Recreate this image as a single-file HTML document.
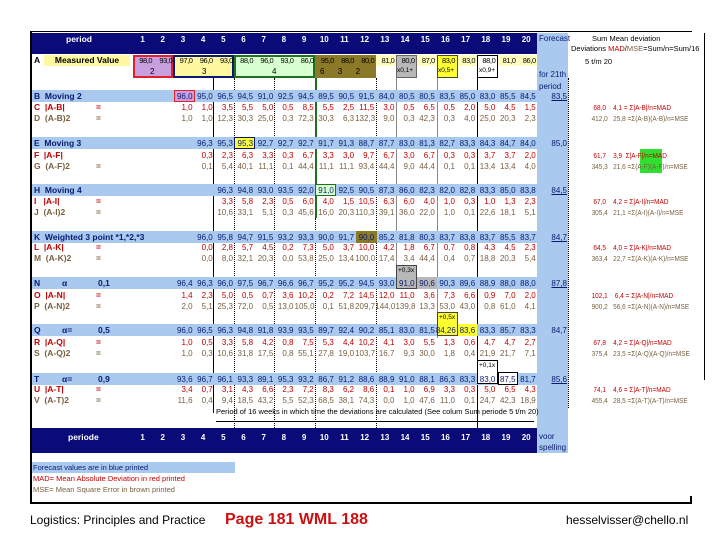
<!DOCTYPE html>
<html><head><meta charset="utf-8"><style>
*{margin:0;padding:0;box-sizing:border-box}
body{width:720px;height:540px;background:#fff;position:relative;overflow:hidden;font-family:"Liberation Sans",sans-serif}
.a{position:absolute}
.band{position:absolute;left:32px;width:505px;height:12px;background:#a9c9ef}
.row{position:absolute;left:133px;display:grid;grid-template-columns:repeat(20,20.2px);font-size:8px;line-height:11px;height:11px;text-align:right;white-space:nowrap}
.row span{padding-right:1px}
.b{color:#0a1a70}.r{color:#c00000}.br{color:#7a6040}
.lab{position:absolute;left:34px;font-size:8.5px;line-height:11px;font-weight:bold}
.fc{position:absolute;left:537px;width:30px;text-align:right;font-size:8px;color:#0a1a70;text-decoration:underline;line-height:11px}
.rt{position:absolute;left:588px;font-size:7.5px;line-height:11px;white-space:pre;transform:scaleX(0.86);transform-origin:0 0}
.vl{position:absolute;width:0}
</style></head><body>
<div class="a" style="left:30px;top:31px;width:2px;height:473px;background:#000"></div>
<div class="a" style="left:30px;top:31px;width:662px;height:1px;background:#000"></div>
<div class="a" style="left:30px;top:502px;width:662px;height:2px;background:#000"></div>
<div class="a" style="left:690px;top:496px;width:2px;height:8px;background:#000"></div>
<div class="a" style="left:704px;top:33px;width:1px;height:347px;background:#000"></div>
<div class="a" style="left:32px;top:33px;width:505px;height:21px;background:#0a0a78"></div>
<div class="a" style="left:537px;top:33px;width:31px;height:420px;background:#a9c9ef"></div>
<div class="a" style="left:32px;top:428px;width:505px;height:25px;background:#0a0a78"></div>
<div class="a" style="left:66px;top:34px;color:#fff;font-size:8.5px;font-weight:bold">period</div>
<div class="row" style="top:34px;color:#fff;font-weight:bold;text-align:center;font-size:8px"><span>1</span><span>2</span><span>3</span><span>4</span><span>5</span><span>6</span><span>7</span><span>8</span><span>9</span><span>10</span><span>11</span><span>12</span><span>13</span><span>14</span><span>15</span><span>16</span><span>17</span><span>18</span><span>19</span><span>20</span></div>
<div class="a" style="left:539px;top:34px;color:#0a1a70;font-size:8px">Forecast</div>
<div class="a" style="left:592px;top:34px;font-size:7.5px">Sum Mean deviation</div>
<div class="a" style="left:571px;top:44px;font-size:7.5px">Deviations <span class="r">MAD</span>/<span class="br">MSE</span>=Sum/n=Sum/16</div>
<div class="a" style="left:585px;top:57px;font-size:7.5px">5 t/m 20</div>
<div class="a" style="left:539px;top:69px;font-size:8px;color:#0a1a70;line-height:12px">for 21th<br>period</div>
<div class="a" style="left:32px;top:55px;width:10px;height:11px;font-size:8.5px;font-weight:bold;padding-left:2px">A</div>
<div class="a" style="left:44px;top:55px;width:86px;height:11px;background:#fff8a0;font-size:8.5px;font-weight:bold;text-align:center;line-height:11px">Measured Value</div>
<div class="a" style="left:133px;top:55px;width:404px;height:11px;background:#fffcc0"></div>
<div class="a" style="left:133px;top:55px;width:40px;height:23px;background:#c8a0e0;border:2px solid #e0202a"></div>
<div class="a" style="left:173px;top:55px;width:61px;height:23px;background:#fff8a0;border:2px solid #0a1a70"></div>
<div class="a" style="left:234px;top:55px;width:81px;height:23px;background:#d8ffd0;border:2px solid #207020"></div>
<div class="a" style="left:315px;top:55px;width:61px;height:23px;background:#8a7a28"></div>
<div class="a" style="left:396px;top:55px;width:21px;height:23px;background:#b8b8b8;border:1px solid #666"></div>
<div class="a" style="left:437px;top:55px;width:21px;height:23px;background:#ffff30;border:1px solid #444"></div>
<div class="a" style="left:477px;top:55px;width:21px;height:23px;background:#fff;border:1.5px solid #000"></div>
<div class="row" style="top:55px;font-size:7.5px;letter-spacing:-0.4px"><span>98,0</span><span>93,0</span><span>97,0</span><span>96,0</span><span>93,0</span><span>88,0</span><span>96,0</span><span>93,0</span><span>86,0</span><span>95,0</span><span>88,0</span><span>80,0</span><span>81,0</span><span>80,0</span><span>87,0</span><span>83,0</span><span>83,0</span><span>88,0</span><span>81,0</span><span>86,0</span></div>
<div class="a" style="left:150px;top:67px;font-size:8px">2</div>
<div class="a" style="left:202px;top:67px;font-size:8px">3</div>
<div class="a" style="left:272px;top:67px;font-size:8px">4</div>
<div class="a" style="left:320px;top:67px;font-size:8px">6&nbsp;&nbsp;&nbsp;&nbsp;&nbsp;&nbsp;3&nbsp;&nbsp;&nbsp;&nbsp;&nbsp;&nbsp;2</div>
<div class="a" style="left:397px;top:67px;font-size:6.5px">x0,1+</div>
<div class="a" style="left:438px;top:67px;font-size:6.5px">x0,5+</div>
<div class="a" style="left:479px;top:67px;font-size:6.5px">x0,9+</div>
<div class="vl" style="left:213px;top:78px;height:335px;border-left:1.5px solid #000"></div>
<div class="vl" style="left:234px;top:78px;height:350px;border-left:1px dotted #000"></div>
<div class="vl" style="left:315px;top:78px;height:140px;border-left:2px solid #207020"></div>
<div class="vl" style="left:315px;top:218px;height:210px;border-left:1px dotted #000"></div>
<div class="vl" style="left:274px;top:78px;height:350px;border-left:1px dotted #000"></div>
<div class="vl" style="left:376px;top:78px;height:350px;border-left:1px dotted #000"></div>
<div class="vl" style="left:396px;top:78px;height:190px;border-left:1.5px solid #888"></div>
<div class="vl" style="left:437px;top:78px;height:260px;border-left:1.5px solid #a09020"></div>
<div class="vl" style="left:477px;top:78px;height:350px;border-left:1px solid #000"></div>
<div class="vl" style="left:568px;top:78px;height:330px;border-left:1px dotted #000"></div>
<div class="band" style="top:90px"></div><div class="band" style="top:137px"></div><div class="band" style="top:184px"></div><div class="band" style="top:231px"></div><div class="band" style="top:277px"></div><div class="band" style="top:324px"></div><div class="band" style="top:373px"></div>
<div class="a" style="left:174px;top:90px;width:21px;height:12px;background:#c8a0e0;border:1.5px solid #e0202a"></div>
<div class="a" style="left:234px;top:137px;width:21px;height:12px;background:#ffff40;border:1.5px solid #0a1a70"></div>
<div class="a" style="left:315px;top:184px;width:21px;height:12px;background:#d8ffd0;border:1.5px solid #207020"></div>
<div class="a" style="left:356px;top:231px;width:21px;height:12px;background:#8a7a28"></div>
<div class="a" style="left:396px;top:265px;width:21px;height:24px;background:#b8b8b8;border:1px solid #444"></div>
<div class="a" style="left:417px;top:277px;width:20px;height:12px;background:#b8b8b8"></div>
<div class="a" style="left:437px;top:312px;width:21px;height:24px;background:#ffff30;border:1px solid #444"></div>
<div class="a" style="left:458px;top:324px;width:19px;height:12px;background:#ffff30"></div>
<div class="a" style="left:477px;top:360px;width:21px;height:24px;background:#fff;border:1.5px solid #000"></div>
<div class="a" style="left:498px;top:372px;width:20px;height:13px;background:#fff;border:1.5px solid #000"></div>
<div class="a" style="left:398px;top:267px;font-size:6.5px">+0,3x</div>
<div class="a" style="left:439px;top:314px;font-size:6.5px">+0,5x</div>
<div class="a" style="left:479px;top:362px;font-size:6.5px">+0,1x</div>
<div class="a" style="left:640px;top:149px;width:22px;height:24px;background:#30e030"></div>
<div class="lab b" style="top:91px">B&nbsp; Moving 2</div>
<div class="lab r" style="top:102px">C&nbsp; |A-B|<span style="position:absolute;left:62px">=</span></div>
<div class="lab br" style="top:113px">D&nbsp; (A-B)2<span style="position:absolute;left:62px">=</span></div>
<div class="lab b" style="top:138px">E&nbsp; Moving 3</div>
<div class="lab r" style="top:150px">F&nbsp; |A-F|</div>
<div class="lab br" style="top:161px">G&nbsp; (A-F)2<span style="position:absolute;left:62px">=</span></div>
<div class="lab b" style="top:185px">H&nbsp; Moving 4</div>
<div class="lab r" style="top:196px">I&nbsp;&nbsp; |A-I|<span style="position:absolute;left:62px">=</span></div>
<div class="lab br" style="top:207px">J&nbsp; (A-I)2<span style="position:absolute;left:62px">=</span></div>
<div class="lab b" style="top:232px">K&nbsp; Weighted 3 point *1,*2,*3</div>
<div class="lab r" style="top:242px">L&nbsp; |A-K|<span style="position:absolute;left:62px">=</span></div>
<div class="lab br" style="top:253px">M&nbsp; (A-K)2<span style="position:absolute;left:62px">=</span></div>
<div class="lab b" style="top:278px">N<span style="position:absolute;left:28px">α</span><span style="position:absolute;left:64px">0,1</span></div>
<div class="lab r" style="top:290px">O&nbsp; |A-N|<span style="position:absolute;left:62px">=</span></div>
<div class="lab br" style="top:301px">P&nbsp; (A-N)2<span style="position:absolute;left:62px">=</span></div>
<div class="lab b" style="top:325px">Q<span style="position:absolute;left:28px">α=</span><span style="position:absolute;left:64px">0,5</span></div>
<div class="lab r" style="top:337px">R&nbsp; |A-Q|<span style="position:absolute;left:62px">=</span></div>
<div class="lab br" style="top:348px">S&nbsp; (A-Q)2<span style="position:absolute;left:62px">=</span></div>
<div class="lab b" style="top:374px">T<span style="position:absolute;left:28px">α=</span><span style="position:absolute;left:64px">0,9</span></div>
<div class="lab r" style="top:384px">U&nbsp; |A-T|<span style="position:absolute;left:62px">=</span></div>
<div class="lab br" style="top:395px">V&nbsp; (A-T)2<span style="position:absolute;left:62px">=</span></div>
<div class="row b" style="top:91px"><span style="grid-column-start:3">96,0</span><span>95,0</span><span>96,5</span><span>94,5</span><span>91,0</span><span>92,5</span><span>94,5</span><span>89,5</span><span>90,5</span><span>91,5</span><span>84,0</span><span>80,5</span><span>80,5</span><span>83,5</span><span>85,0</span><span>83,0</span><span>85,5</span><span>84,5</span></div>
<div class="row r" style="top:102px"><span style="grid-column-start:3">1,0</span><span>1,0</span><span>3,5</span><span>5,5</span><span>5,0</span><span>0,5</span><span>8,5</span><span>5,5</span><span>2,5</span><span>11,5</span><span>3,0</span><span>0,5</span><span>6,5</span><span>0,5</span><span>2,0</span><span>5,0</span><span>4,5</span><span>1,5</span></div>
<div class="row br" style="top:113px"><span style="grid-column-start:3">1,0</span><span>1,0</span><span>12,3</span><span>30,3</span><span>25,0</span><span>0,3</span><span>72,3</span><span>30,3</span><span>6,3</span><span>132,3</span><span>9,0</span><span>0,3</span><span>42,3</span><span>0,3</span><span>4,0</span><span>25,0</span><span>20,3</span><span>2,3</span></div>
<div class="row b" style="top:138px"><span style="grid-column-start:4">96,3</span><span>95,3</span><span>95,3</span><span>92,7</span><span>92,7</span><span>92,7</span><span>91,7</span><span>91,3</span><span>88,7</span><span>87,7</span><span>83,0</span><span>81,3</span><span>82,7</span><span>83,3</span><span>84,3</span><span>84,7</span><span>84,0</span></div>
<div class="row r" style="top:150px"><span style="grid-column-start:4">0,3</span><span>2,3</span><span>6,3</span><span>3,3</span><span>0,3</span><span>6,7</span><span>3,3</span><span>3,0</span><span>9,7</span><span>6,7</span><span>3,0</span><span>6,7</span><span>0,3</span><span>0,3</span><span>3,7</span><span>3,7</span><span>2,0</span></div>
<div class="row br" style="top:161px"><span style="grid-column-start:4">0,1</span><span>5,4</span><span>40,1</span><span>11,1</span><span>0,1</span><span>44,4</span><span>11,1</span><span>11,1</span><span>93,4</span><span>44,4</span><span>9,0</span><span>44,4</span><span>0,1</span><span>0,1</span><span>13,4</span><span>13,4</span><span>4,0</span></div>
<div class="row b" style="top:185px"><span style="grid-column-start:5">96,3</span><span>94,8</span><span>93,0</span><span>93,5</span><span>92,0</span><span>91,0</span><span>92,5</span><span>90,5</span><span>87,3</span><span>86,0</span><span>82,3</span><span>82,0</span><span>82,8</span><span>83,3</span><span>85,0</span><span>83,8</span></div>
<div class="row r" style="top:196px"><span style="grid-column-start:5">3,3</span><span>5,8</span><span>2,3</span><span>0,5</span><span>6,0</span><span>4,0</span><span>1,5</span><span>10,5</span><span>6,3</span><span>6,0</span><span>4,0</span><span>1,0</span><span>0,3</span><span>1,0</span><span>1,3</span><span>2,3</span></div>
<div class="row br" style="top:207px"><span style="grid-column-start:5">10,6</span><span>33,1</span><span>5,1</span><span>0,3</span><span>45,6</span><span>16,0</span><span>20,3</span><span>110,3</span><span>39,1</span><span>36,0</span><span>22,0</span><span>1,0</span><span>0,1</span><span>22,6</span><span>18,1</span><span>5,1</span></div>
<div class="row b" style="top:232px"><span style="grid-column-start:4">96,0</span><span>95,8</span><span>94,7</span><span>91,5</span><span>93,2</span><span>93,3</span><span>90,0</span><span>91,7</span><span>90,0</span><span>85,2</span><span>81,8</span><span>80,3</span><span>83,7</span><span>83,8</span><span>83,7</span><span>85,5</span><span>83,7</span></div>
<div class="row r" style="top:242px"><span style="grid-column-start:4">0,0</span><span>2,8</span><span>5,7</span><span>4,5</span><span>0,2</span><span>7,3</span><span>5,0</span><span>3,7</span><span>10,0</span><span>4,2</span><span>1,8</span><span>6,7</span><span>0,7</span><span>0,8</span><span>4,3</span><span>4,5</span><span>2,3</span></div>
<div class="row br" style="top:253px"><span style="grid-column-start:4">0,0</span><span>8,0</span><span>32,1</span><span>20,3</span><span>0,0</span><span>53,8</span><span>25,0</span><span>13,4</span><span>100,0</span><span>17,4</span><span>3,4</span><span>44,4</span><span>0,4</span><span>0,7</span><span>18,8</span><span>20,3</span><span>5,4</span></div>
<div class="row b" style="top:278px"><span style="grid-column-start:3">96,4</span><span>96,3</span><span>96,0</span><span>97,5</span><span>96,7</span><span>96,6</span><span>96,7</span><span>95,2</span><span>95,2</span><span>94,5</span><span>93,0</span><span>91,0</span><span>90,6</span><span>90,3</span><span>89,6</span><span>88,9</span><span>88,0</span><span>88,0</span></div>
<div class="row r" style="top:290px"><span style="grid-column-start:3">1,4</span><span>2,3</span><span>5,0</span><span>0,5</span><span>0,7</span><span>3,6</span><span>10,2</span><span>0,2</span><span>7,2</span><span>14,5</span><span>12,0</span><span>11,0</span><span>3,6</span><span>7,3</span><span>6,6</span><span>0,9</span><span>7,0</span><span>2,0</span></div>
<div class="row br" style="top:301px"><span style="grid-column-start:3">2,0</span><span>5,1</span><span>25,3</span><span>72,0</span><span>0,5</span><span>13,0</span><span>105,0</span><span>0,1</span><span>51,8</span><span>209,7</span><span>144,0</span><span>139,8</span><span>13,3</span><span>53,0</span><span>43,0</span><span>0,8</span><span>61,0</span><span>4,1</span></div>
<div class="row b" style="top:325px"><span style="grid-column-start:3">96,0</span><span>96,5</span><span>96,3</span><span>94,8</span><span>91,8</span><span>93,9</span><span>93,5</span><span>89,7</span><span>92,4</span><span>90,2</span><span>85,1</span><span>83,0</span><span>81,5</span><span>84,26</span><span>83,6</span><span>83,3</span><span>85,7</span><span>83,3</span></div>
<div class="row r" style="top:337px"><span style="grid-column-start:3">1,0</span><span>0,5</span><span>3,3</span><span>5,8</span><span>4,2</span><span>0,8</span><span>7,5</span><span>5,3</span><span>4,4</span><span>10,2</span><span>4,1</span><span>3,0</span><span>5,5</span><span>1,3</span><span>0,6</span><span>4,7</span><span>4,7</span><span>2,7</span></div>
<div class="row br" style="top:348px"><span style="grid-column-start:3">1,0</span><span>0,3</span><span>10,6</span><span>31,8</span><span>17,5</span><span>0,8</span><span>55,1</span><span>27,8</span><span>19,0</span><span>103,7</span><span>16,7</span><span>9,3</span><span>30,0</span><span>1,8</span><span>0,4</span><span>21,9</span><span>21,7</span><span>7,1</span></div>
<div class="row b" style="top:374px"><span style="grid-column-start:3">93,6</span><span>96,7</span><span>96,1</span><span>93,3</span><span>89,1</span><span>95,3</span><span>93,2</span><span>86,7</span><span>91,2</span><span>88,6</span><span>88,9</span><span>91,0</span><span>88,1</span><span>86,3</span><span>83,3</span><span>83,0</span><span>87,5</span><span>81,7</span></div>
<div class="row r" style="top:384px"><span style="grid-column-start:3">3,4</span><span>0,7</span><span>3,1</span><span>4,3</span><span>6,6</span><span>2,3</span><span>7,2</span><span>8,3</span><span>6,2</span><span>8,6</span><span>0,1</span><span>1,0</span><span>6,9</span><span>3,3</span><span>0,3</span><span>5,0</span><span>6,5</span><span>4,3</span></div>
<div class="row br" style="top:395px"><span style="grid-column-start:3">11,6</span><span>0,4</span><span>9,4</span><span>18,5</span><span>43,2</span><span>5,5</span><span>52,3</span><span>68,5</span><span>38,1</span><span>74,3</span><span>0,0</span><span>1,0</span><span>47,6</span><span>11,0</span><span>0,1</span><span>24,7</span><span>42,3</span><span>18,9</span></div>
<div class="fc" style="top:91px">83,5</div><div class="fc" style="top:138px;text-decoration:none">85,0</div><div class="fc" style="top:185px">84,5</div><div class="fc" style="top:232px">84,7</div><div class="fc" style="top:278px">87,8</div><div class="fc" style="top:325px;text-decoration:none">84,7</div><div class="fc" style="top:374px">85,6</div>
<div class="rt r" style="top:102px">   68,0    4,1 = Σ|A-B|/n=MAD</div>
<div class="rt br" style="top:113px">  412,0   25,8 =Σ(A-B)(A-B)/n=MSE</div>
<div class="rt r" style="top:150px">   61,7    3,9  Σ|A-F|/n=MAD</div>
<div class="rt br" style="top:161px">  345,3   21,6 =Σ(A-F)(A-F)/n=MSE</div>
<div class="rt r" style="top:196px">   67,0    4,2 = Σ|A-I|/n=MAD</div>
<div class="rt br" style="top:207px">  305,4   21,1 =Σ(A-I)(A-I)/n=MSE</div>
<div class="rt r" style="top:242px">   64,5    4,0 = Σ|A-K|/n=MAD</div>
<div class="rt br" style="top:253px">  363,4   22,7 =Σ(A-K)(A-K)/n=MSE</div>
<div class="rt r" style="top:290px">  102,1    6,4 = Σ|A-N|/n=MAD</div>
<div class="rt br" style="top:301px">  900,2   56,6 =Σ(A-N)(A-N)/n=MSE</div>
<div class="rt r" style="top:337px">   67,8    4,2 = Σ|A-Q|/n=MAD</div>
<div class="rt br" style="top:348px">  375,4   23,5 =Σ(A-Q)(A-Q)/n=MSE</div>
<div class="rt r" style="top:384px">   74,1    4,6 = Σ|A-T|/n=MAD</div>
<div class="rt br" style="top:395px">  455,4   28,5 =Σ(A-T)(A-T)/n=MSE</div>
<div class="a" style="left:216px;top:407px;font-size:7.5px;white-space:nowrap">Period of 16 weeks in which time the deviations are calculated (See colum Sum periode 5 t/m 20)</div>
<div class="a" style="left:216px;top:421px;width:318px;height:1px;background:#000"></div>
<div class="a" style="left:68px;top:432px;color:#fff;font-size:8.5px;font-weight:bold">periode</div>
<div class="row" style="top:432px;color:#fff;font-weight:bold;text-align:center"><span>1</span><span>2</span><span>3</span><span>4</span><span>5</span><span>6</span><span>7</span><span>8</span><span>9</span><span>10</span><span>11</span><span>12</span><span>13</span><span>14</span><span>15</span><span>16</span><span>17</span><span>18</span><span>19</span><span>20</span></div>
<div class="a" style="left:539px;top:431px;font-size:8px;color:#0a1a70;line-height:11px">voor<br>spelling</div>
<div class="a" style="left:32px;top:462px;width:203px;height:11px;background:#a9c9ef;font-size:7.5px;color:#0a1a70;line-height:11px;padding-left:1px">Forecast values are in blue printed</div>
<div class="a r" style="left:33px;top:474px;font-size:7.5px">MAD= Mean Absolute Deviation in red printed</div>
<div class="a br" style="left:33px;top:485px;font-size:7.5px">MSE= Mean Square Error in brown printed</div>
<div class="a" style="left:30px;top:513px;font-size:12px">Logistics: Principles and Practice</div>
<div class="a" style="left:225px;top:511px;font-size:16px;font-weight:bold;color:#cc1010">Page 181 WML 188</div>
<div class="a" style="left:566px;top:513px;font-size:12px">hesselvisser@chello.nl</div>
</body></html>
